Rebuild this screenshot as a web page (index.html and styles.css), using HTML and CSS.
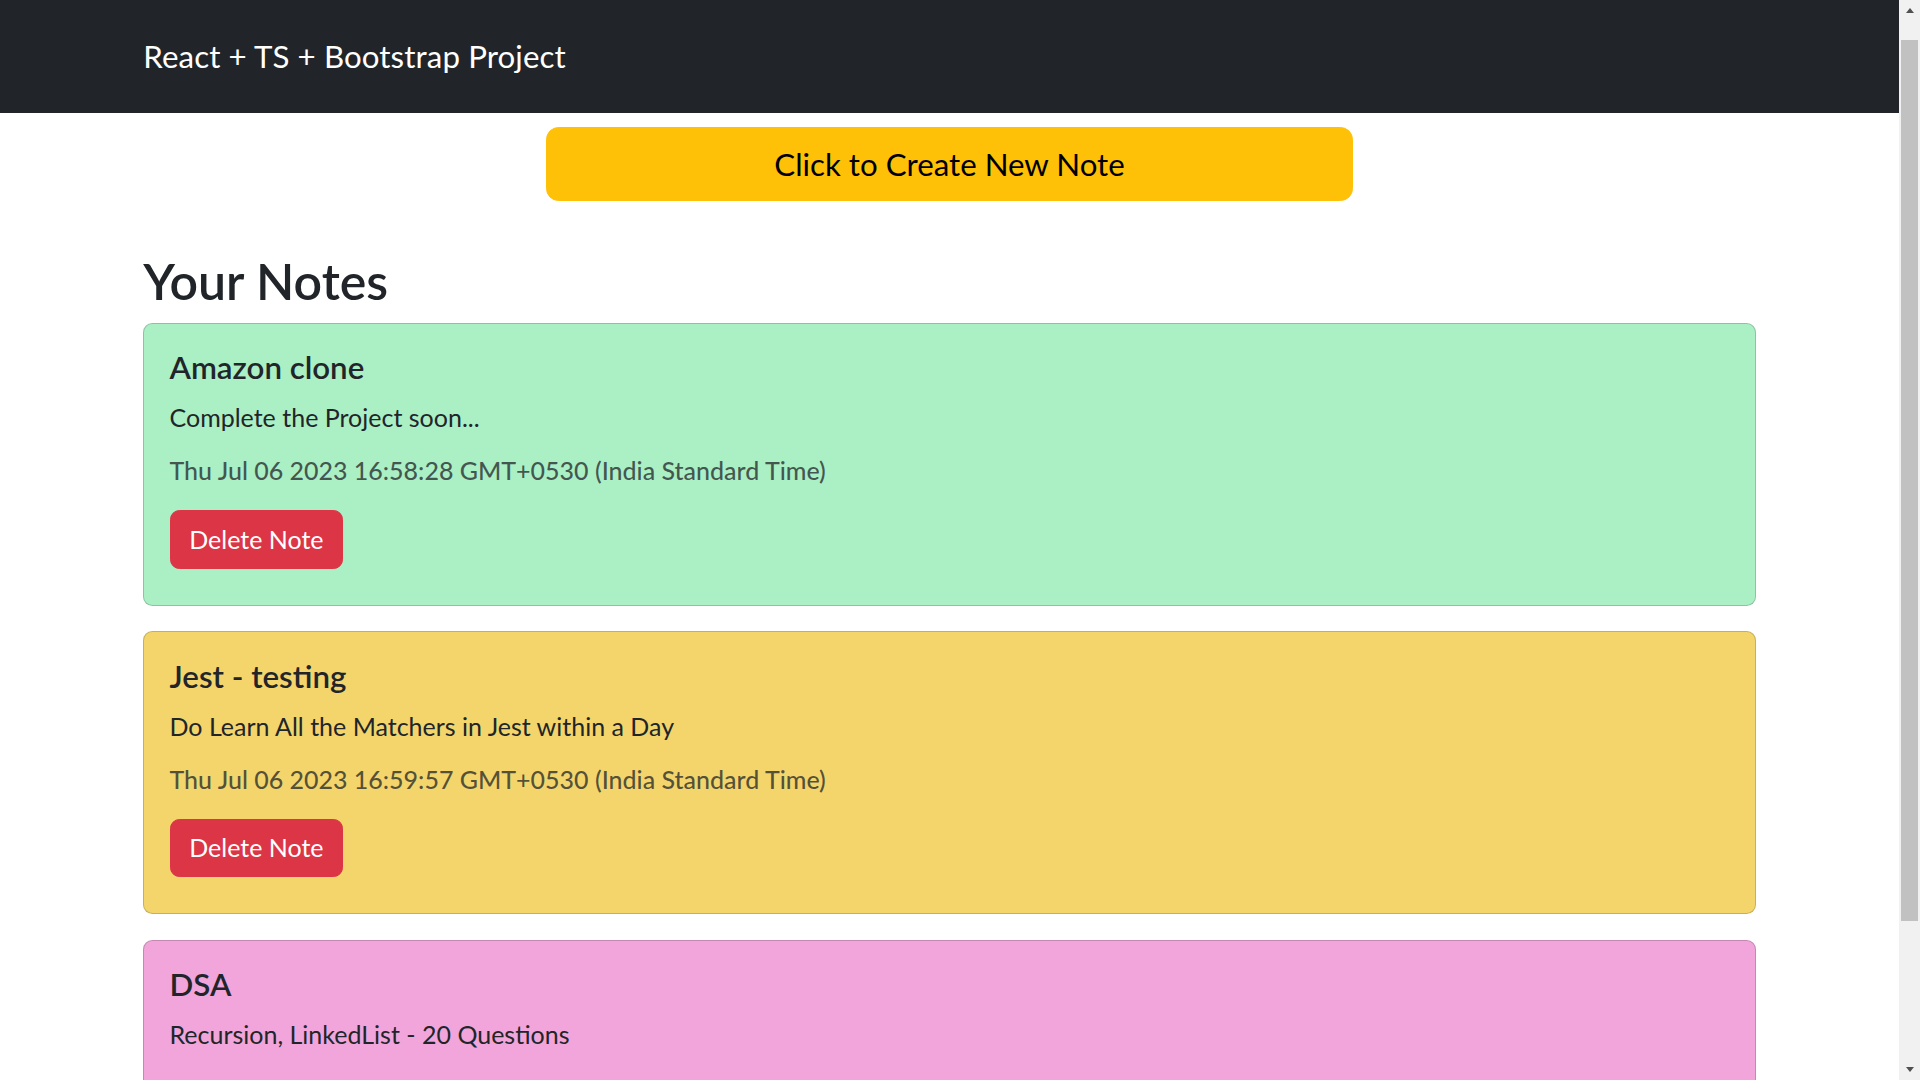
FILE: index.html
```html
<!DOCTYPE html>
<html lang="en">
<head>
<meta charset="utf-8">
<title>React + TS + Bootstrap Project</title>
<link rel="stylesheet" href="styles.css">
</head>
<body>
<div class="viewport">
  <div class="page">
    <nav class="navbar">
      <div class="container">
        <span class="brand">React + TS + Bootstrap Project</span>
      </div>
    </nav>
    <div class="container">
      <button class="btn-create" type="button">Click to Create New Note</button>
      <h2 class="section-title">Your Notes</h2>

      <div class="note-card note-green">
        <h5 class="note-title">Amazon clone</h5>
        <p class="note-text">Complete the Project soon...</p>
        <h6 class="note-date">Thu Jul 06 2023 16:58:28 GMT+0530 (India Standard Time)</h6>
        <button class="btn-delete" type="button">Delete Note</button>
      </div>

      <div class="note-card note-yellow">
        <h5 class="note-title">Jest - testing</h5>
        <p class="note-text">Do Learn All the Matchers in Jest within a Day</p>
        <h6 class="note-date">Thu Jul 06 2023 16:59:57 GMT+0530 (India Standard Time)</h6>
        <button class="btn-delete" type="button">Delete Note</button>
      </div>

      <div class="note-card note-pink">
        <h5 class="note-title">DSA</h5>
        <p class="note-text">Recursion, LinkedList - 20 Questions</p>
      </div>
    </div>
  </div>
  <div class="scrollbar">
    <div class="sb-btn"><span class="sb-arrow-up"></span></div>
    <div class="sb-thumb"></div>
    <div class="sb-fill"></div>
    <div class="sb-btn"><span class="sb-arrow-down"></span></div>
  </div>
</div>
</body>
</html>
```

FILE: styles.css
```css
* {
  box-sizing: border-box;
}

html,
body {
  margin: 0;
  padding: 0;
  height: 100%;
  overflow: hidden;
}

body {
  font-family: "Segoe UI", Lato, "Liberation Sans", sans-serif;
  font-size: 25px;
  line-height: 1.5;
  color: #212529;
  background: #fff;
}

.viewport {
  display: flex;
  height: 100vh;
}

.page {
  flex: 1;
  min-width: 0;
  overflow: hidden;
}

.container {
  width: 1650px;
  margin: 0 auto;
  padding: 0 18.75px;
}

/* Navbar */
.navbar {
  background: #212529;
  padding: 25px 0;
}

.navbar .container {
  display: flex;
  align-items: center;
}

.brand {
  display: block;
  color: #fff;
  font-size: 31.25px;
  line-height: 47px;
  padding: 8px 0;
  letter-spacing: 0.1px;
}

/* Create button */
.btn-create {
  display: block;
  width: 50%;
  margin: 14px auto 0;
  background: #ffc107;
  border: 1px solid #ffc107;
  border-radius: 12.5px;
  color: #000;
  font-family: inherit;
  font-size: 31.25px;
  line-height: 47px;
  padding: 12.5px 25px;
  text-align: center;
}

.section-title {
  margin: 50px 0 11.5px;
  font-size: 50px;
  line-height: 60px;
  font-weight: 600;
}

/* Cards */
.note-card {
  display: flex;
  flex-direction: column;
  align-items: flex-start;
  border: 1px solid rgba(0, 0, 0, 0.175);
  border-radius: 9.375px;
  padding: 25.5px 25.25px 25px;
  margin-bottom: 25.5px;
}

.note-green {
  background: #abefc5;
}

.note-yellow {
  background: #f3d56c;
}

.note-pink {
  background: #f1a5da;
}

.note-title {
  margin: 0 0 12.5px;
  font-size: 31.25px;
  line-height: 37.5px;
  font-weight: 600;
}

.note-text {
  margin: 0 0 25px;
  font-size: 25px;
  line-height: 37.5px;
}

.note-date {
  margin: -6.25px 0 12.5px;
  font-size: 25px;
  line-height: 30px;
  font-weight: 500;
  color: rgba(33, 37, 41, 0.75);
}

.btn-delete {
  margin: 12.5px 0 11px;
  background: #dc3545;
  border: 1px solid #dc3545;
  border-radius: 9.375px;
  color: #fff;
  font-family: inherit;
  font-size: 25px;
  line-height: 37.5px;
  padding: 9.375px 18.75px;
}

/* Scrollbar */
.scrollbar {
  flex: none;
  width: 21px;
  background: #f1f1f1;
  display: flex;
  flex-direction: column;
  align-items: center;
}

.sb-btn {
  flex: none;
  width: 21px;
  height: 21px;
  display: flex;
  align-items: center;
  justify-content: center;
}

.sb-arrow-up {
  width: 0;
  height: 0;
  border-left: 4.5px solid transparent;
  border-right: 4.5px solid transparent;
  border-bottom: 5px solid #505050;
}

.sb-arrow-down {
  width: 0;
  height: 0;
  border-left: 4.5px solid transparent;
  border-right: 4.5px solid transparent;
  border-top: 5px solid #505050;
}

.sb-thumb {
  flex: none;
  width: 17px;
  height: 881px;
  margin-top: 19px;
  background: #c1c1c1;
}

.sb-fill {
  flex: 1;
}
```
